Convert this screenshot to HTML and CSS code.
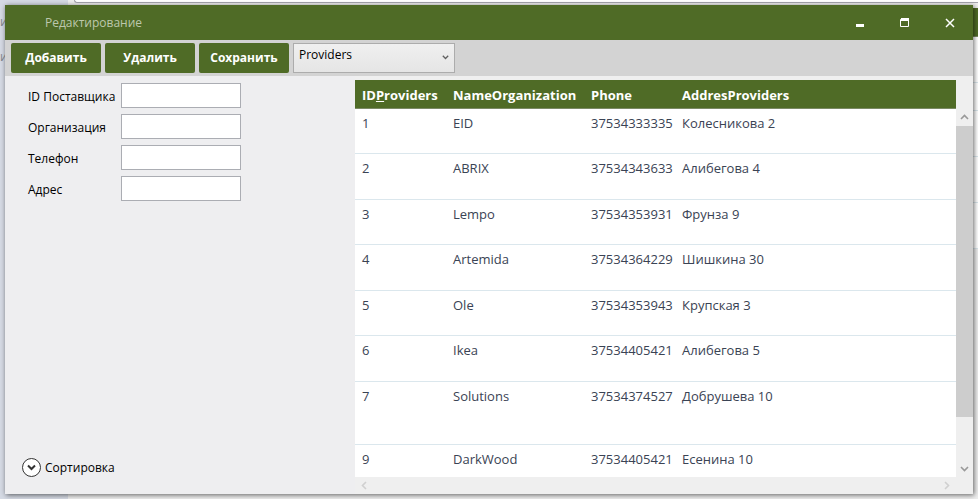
FILE: index.html
```html
<!DOCTYPE html>
<html lang="ru">
<head>
<meta charset="utf-8">
<title>Редактирование</title>
<link rel="stylesheet" href="styles.css">
</head>
<body>
<div class="backdrop" aria-hidden="true">
  <div class="back-side"><span>ия</span><span>ис</span></div>
  <div class="back-main">
    <div class="back-field"></div>
    <div class="back-header"></div>
    <div class="back-row"></div>
    <div class="back-row short"></div>
    <div class="back-row"></div>
    <div class="back-row"></div>
    <div class="back-row"></div>
  </div>
</div>
<main class="window">
  <header class="titlebar">
    <h1>Редактирование</h1>
    <div class="window-buttons">
      <button type="button" aria-label="Свернуть"><svg width="10" height="10" viewBox="0 0 10 10"><path d="M1 6h8v3H1z" fill="#fff"/></svg></button>
      <button type="button" aria-label="Развернуть"><svg width="10" height="10" viewBox="0 0 10 10"><path d="M1 0h8v3H1z" fill="#fff"/><path d="M.5 1.500h8v7h-8z" fill="none" stroke="#fff"/></svg></button>
      <button type="button" aria-label="Закрыть"><svg width="10" height="10" viewBox="0 0 10 10"><path d="M1 1l8 8M9 1l-8 8" stroke="#fff" stroke-width="1.500"/></svg></button>
    </div>
  </header>
  <div class="toolbar">
    <button type="button" class="action">Добавить</button>
    <button type="button" class="action">Удалить</button>
    <button type="button" class="action">Сохранить</button>
    <div class="picker">
      <select aria-label="Таблица"><option>Providers</option></select>
      <svg width="7" height="5" viewBox="0 0 7 5"><path d="M.8 .8l2.700 2.700L6.200 .8" fill="none" stroke="#606060" stroke-width="1.300"/></svg>
    </div>
  </div>
  <div class="content">
    <section class="side">
      <form class="fields">
        <label for="id">ID Поставщика</label><input id="id" type="text">
        <label for="org">Организация</label><input id="org" type="text">
        <label for="phone">Телефон</label><input id="phone" type="text">
        <label for="address">Адрес</label><input id="address" type="text">
      </form>
      <button type="button" class="sorting">
        <svg width="19" height="19" viewBox="0 0 19 19"><circle cx="9.500" cy="9.500" r="9" fill="#fff" stroke="#333"/><path d="M6 7.500l3.500 3.500L13 7.500" fill="none" stroke="#333" stroke-width="2"/></svg>
        <span>Сортировка</span>
      </button>
    </section>
    <section class="grid">
      <div class="sheet">
        <table>
          <colgroup><col class="c-id"><col class="c-name"><col class="c-phone"><col></colgroup>
          <thead><tr><th>ID<u>P</u>roviders</th><th>NameOrganization</th><th>Phone</th><th>AddresProviders</th></tr></thead>
          <tbody>
            <tr><td>1</td><td>EID</td><td>37534333335</td><td>Колесникова 2</td></tr>
            <tr><td>2</td><td>ABRIX</td><td>37534343633</td><td>Алибегова 4</td></tr>
            <tr><td>3</td><td>Lempo</td><td>37534353931</td><td>Фрунза 9</td></tr>
            <tr><td>4</td><td>Artemida</td><td>37534364229</td><td>Шишкина 30</td></tr>
            <tr><td>5</td><td>Ole</td><td>37534353943</td><td>Крупская 3</td></tr>
            <tr><td>6</td><td>Ikea</td><td>37534405421</td><td>Алибегова 5</td></tr>
            <tr class="tall"><td>7</td><td>Solutions</td><td>37534374527</td><td>Добрушева 10</td></tr>
            <tr><td>9</td><td>DarkWood</td><td>37534405421</td><td>Есенина 10</td></tr>
          </tbody>
        </table>
      </div>
      <div class="vbar">
        <svg width="9" height="6" viewBox="0 0 9 6"><path d="M1 5l3.500-3.500L8 5" fill="none" stroke="#999" stroke-width="1.600"/></svg>
        <div class="track"><div class="thumb"></div></div>
        <svg width="9" height="6" viewBox="0 0 9 6"><path d="M1 1l3.500 3.500L8 1" fill="none" stroke="#999" stroke-width="1.600"/></svg>
      </div>
      <div class="hbar">
        <svg width="6" height="9" viewBox="0 0 6 9"><path d="M5 1L1.500 4.500 5 8" fill="none" stroke="#d0d0d0" stroke-width="1.600"/></svg>
        <svg width="6" height="9" viewBox="0 0 6 9"><path d="M1 1l3.500 3.500L1 8" fill="none" stroke="#d0d0d0" stroke-width="1.600"/></svg>
      </div>
    </section>
  </div>
</main>
</body>
</html>
```
FILE: styles.css
```css
* { box-sizing: border-box; }

body {
  margin: 0;
  height: 100vh;
  padding: 5px;
  overflow: hidden;
  font: 12px/16px "Open Sans", "Noto Sans", sans-serif;
  color: #000;
}

button { border: 0; padding: 0; font: inherit; }
svg { display: block; flex: none; }

.backdrop {
  position: absolute;
  inset: 0;
  z-index: -1;
  display: flex;
}
.back-side {
  width: 68px;
  padding-top: 14px;
  background: #d5dae4;
  color: #85888e;
  display: flex;
  flex-direction: column;
  gap: 19px;
}
.back-main { flex: 1; display: flex; flex-direction: column; background: #eee; }
.back-field {
  height: 3px;
  margin-left: 6px;
  background: #fff;
  border-bottom: 1px solid #a5a5ad;
  border-left: 1px solid #a5a5ad;
  border-bottom-left-radius: 3px;
}
.back-header { height: 29px; margin-top: 5px; background: #4f6b26; border-bottom: 1px solid #7a8a63; }
.back-row { height: 46px; background: #fff; border-bottom: 1px solid #dbe7ed; }
.back-row.short { height: 28px; }

.window {
  height: 100%;
  display: flex;
  flex-direction: column;
  background: #eeeef0;
  box-shadow: 1px 1px 5px #0009;
}

.titlebar {
  flex: none;
  height: 35px;
  padding: 0 18px 0 40px;
  display: flex;
  align-items: center;
  justify-content: space-between;
  background: #4f6b26;
}
h1 { margin: 0; font-size: 12px; font-weight: 400; color: #bdc8ad; }
.window-buttons { display: flex; gap: 35px; }
.window-buttons button { background: none; }

.toolbar {
  flex: none;
  height: 36px;
  padding: 3px 6px;
  display: flex;
  gap: 4px;
  background: #d3d3d3;
}
.action {
  width: 90px;
  border-radius: 2px;
  background: #4f6b26;
  color: #fff;
  font-weight: 700;
}
.picker { position: relative; width: 162px; }
.picker select {
  width: 100%;
  height: 100%;
  padding: 0 5px 6px;
  border: 1px solid #acacac;
  border-radius: 0;
  appearance: none;
  background: linear-gradient(#f0f0f0, #e5e5e5);
  color: #000;
  font: inherit;
}
.picker svg { position: absolute; right: 6px; top: 12px; pointer-events: none; }

.content { flex: 1; min-height: 0; display: flex; }
.side {
  flex: none;
  width: 350px;
  padding: 7px 17px 17px;
  display: flex;
  flex-direction: column;
  justify-content: space-between;
  align-items: flex-start;
}
.fields {
  padding-left: 6px;
  display: grid;
  grid-template-columns: 93px 120px;
  gap: 6px 0;
}
.fields label { padding-top: 6px; white-space: nowrap; }
.fields input { width: 100%; height: 25px; border: 1px solid #abadb3; background: #fff; }
.sorting { display: flex; align-items: center; gap: 4px; background: none; color: #000; }

.grid {
  flex: 1;
  min-width: 0;
  padding-top: 4px;
  display: grid;
  grid-template: minmax(0, 1fr) 17px / minmax(0, 1fr) 17px;
  background: #efefef;
}
.sheet { overflow: hidden; background: #fff; }
table { width: 100%; border-spacing: 0; table-layout: fixed; font-size: 13px; line-height: 18px; }
.c-id { width: 91px; }
.c-name { width: 138px; }
.c-phone { width: 91px; }
th {
  height: 29px;
  padding: 2px 7px 0;
  text-align: left;
  white-space: nowrap;
  background: #4f6b26;
  color: #fff;
  border-bottom: 1px solid #7a8a63;
}
td {
  height: 45px;
  padding: 5px 7px;
  vertical-align: top;
  white-space: nowrap;
  color: #3a4354;
  border-bottom: 1px solid #dbe7ed;
}
tr:nth-child(even) td { height: 46px; }
.tall td { height: 63px; }

.vbar {
  padding: 34px 0 5px;
  display: flex;
  flex-direction: column;
  align-items: center;
  gap: 6px;
}
.track { flex: 1; align-self: stretch; }
.thumb { height: 87%; background: #cdcdcd; }
.hbar { padding: 0 6px; display: flex; align-items: center; justify-content: space-between; }
```
